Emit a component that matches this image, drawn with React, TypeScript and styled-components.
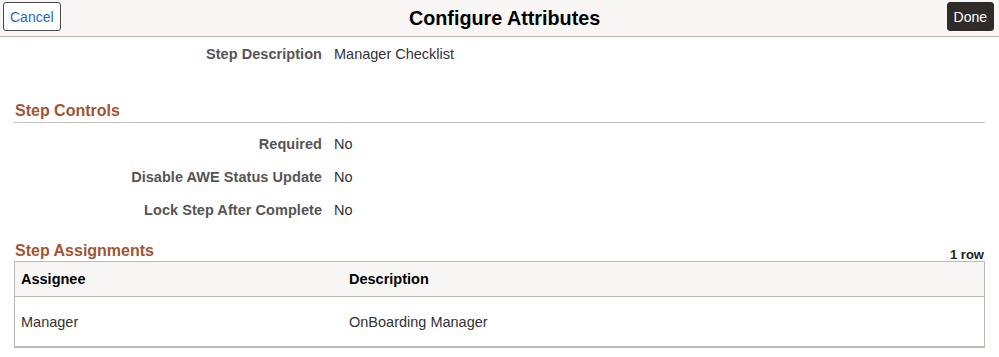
import React from 'react';
import styled, { createGlobalStyle } from 'styled-components';

const GlobalStyle = createGlobalStyle`
  html, body {
    margin: 0;
    padding: 0;
    background: #ffffff;
    font-family: "Liberation Sans", Arial, sans-serif;
  }
`;

const Page = styled.div`
  width: 999px;
  height: 357px;
  overflow: hidden;
  background: #fff;
`;

const Header = styled.header`
  height: 36px;
  display: flex;
  align-items: center;
  justify-content: space-between;
  padding: 0 5px 0 3px;
  background: #f8f7f6;
  border-bottom: 1px solid #bdb8b1;
  box-sizing: content-box;
`;

const HeaderButton = styled.button<{ primary?: boolean }>`
  height: 29px;
  margin-top: -3px;
  padding: 0 6px;
  border-radius: 3px;
  font-family: "Liberation Sans", Arial, sans-serif;
  font-size: 14px;
  cursor: pointer;
  border: 1px solid ${p => (p.primary ? '#2f2b28' : '#4a4a4a')};
  background: ${p => (p.primary ? '#2f2b28' : '#ffffff')};
  color: ${p => (p.primary ? '#ffffff' : '#1e6ac3')};
`;

const Title = styled.h1`
  margin: 0 0 0 2px;
  font-size: 19.75px;
  font-weight: bold;
  color: #000;
`;

const Content = styled.main`
  padding: 0 14px;
`;

const FieldRow = styled.div`
  display: flex;
  align-items: center;
  height: 33px;
  font-size: 14.5px;
`;

const FieldLabel = styled.span`
  width: 308px;
  text-align: right;
  font-weight: bold;
  color: #555;
  letter-spacing: 0.05px;
`;

const FieldValue = styled.span`
  margin-left: 12px;
  color: #333;
`;

const SectionHead = styled.div<{ gap: number; ruled?: boolean }>`
  display: flex;
  justify-content: space-between;
  align-items: flex-end;
  margin-top: ${p => p.gap}px;
  padding-bottom: ${p => (p.ruled ? '1px' : '0')};
  border-bottom: ${p => (p.ruled ? '1px solid #c4c0ba' : 'none')};
`;

const SectionTitle = styled.h2`
  margin: 0 0 0 1px;
  font-size: 16px;
  line-height: 20px;
  font-weight: bold;
  color: #9e5634;
`;

const RowCount = styled.span`
  font-size: 13px;
  font-weight: bold;
  color: #222;
  margin-right: 1px;
  margin-bottom: -1px;
`;

const Controls = styled.div`
  margin-top: 4px;
`;

const Table = styled.table`
  width: 971px;
  border-collapse: collapse;
  font-size: 14.5px;
  border: 1px solid #bdb8b1;
  border-bottom: 2px solid #bdb8b1;
`;

const HeadCell = styled.th<{ w?: number }>`
  text-align: left;
  font-weight: bold;
  color: #000;
  background: #f8f7f6;
  height: 34px;
  padding: 0 6px;
  width: ${p => (p.w ? `${p.w}px` : 'auto')};
  border-bottom: 1px solid #bdb8b1;
`;

const Cell = styled.td`
  height: 48px;
  padding: 1px 6px 0;
  color: #333;
`;

const controls = [
  { label: 'Required', value: 'No' },
  { label: 'Disable AWE Status Update', value: 'No' },
  { label: 'Lock Step After Complete', value: 'No' },
];

export default function App() {
  return (
    <Page>
      <GlobalStyle />
      <Header>
        <HeaderButton>Cancel</HeaderButton>
        <Title>Configure Attributes</Title>
        <HeaderButton primary>Done</HeaderButton>
      </Header>
      <Content>
        <FieldRow>
          <FieldLabel>Step Description</FieldLabel>
          <FieldValue>Manager Checklist</FieldValue>
        </FieldRow>

        <SectionHead gap={31} ruled>
          <SectionTitle>Step Controls</SectionTitle>
        </SectionHead>
        <Controls>
          {controls.map(c => (
            <FieldRow key={c.label}>
              <FieldLabel>{c.label}</FieldLabel>
              <FieldValue>{c.value}</FieldValue>
            </FieldRow>
          ))}
        </Controls>

        <SectionHead gap={15}>
          <SectionTitle>Step Assignments</SectionTitle>
          <RowCount>1 row</RowCount>
        </SectionHead>
        <Table>
          <thead>
            <tr>
              <HeadCell w={316}>Assignee</HeadCell>
              <HeadCell>Description</HeadCell>
            </tr>
          </thead>
          <tbody>
            <tr>
              <Cell>Manager</Cell>
              <Cell>OnBoarding Manager</Cell>
            </tr>
          </tbody>
        </Table>
      </Content>
    </Page>
  );
}
